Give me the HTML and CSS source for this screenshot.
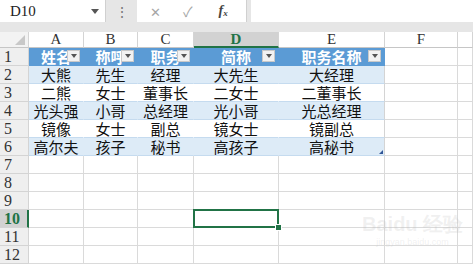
FILE: index.html
```html
<!DOCTYPE html>
<html>
    <head>
        <meta charset="utf-8" />
        <title>Sheet</title>
        <link rel="stylesheet" href="styles.css">
    </head>
    <body>
        <div class="formula-bar">
            <div class="name-box">
                <span class="cell-ref">D10</span>
                <span class="caret"></span>
            </div>
            <div class="dots">⋮</div>
            <div class="fx-box">
                <span class="btn-x">✕</span>
                <span class="btn-ok">✓</span>
                <span class="btn-fx">f<sub>x</sub></span>
            </div>
            <div class="formula-input"></div>
        </div>
        <div class="band"></div>
        <div class="sheet" id="sheet"></div>
        <div class="watermark">
            <div class="wm-logo">Bai<span class="paw">du</span> 经验</div>
            <div class="wm-url">jingyan.baidu.com</div>
        </div>

        <script>
            const letters = ["A", "B", "C", "D", "E", "F", "G"];
            const table = [
                ["姓名", "称呼", "职务", "简称", "职务名称"],
                ["大熊", "先生", "经理", "大先生", "大经理"],
                ["二熊", "女士", "董事长", "二女士", "二董事长"],
                ["光头强", "小哥", "总经理", "光小哥", "光总经理"],
                ["镜像", "女士", "副总", "镜女士", "镜副总"],
                ["高尔夫", "孩子", "秘书", "高孩子", "高秘书"]
            ];

            function cell(cls, text) {
                const div = document.createElement("div");
                div.className = cls;
                if (text) div.textContent = text;
                return div;
            }

            const sheet = document.getElementById("sheet");

            // Column headers
            sheet.appendChild(cell("corner"));
            letters.forEach(function (l) {
                sheet.appendChild(cell(l === "D" ? "col-head active" : "col-head", l === "G" ? "" : l));
            });

            // Rows
            for (let r = 1; r <= 12; r++) {
                sheet.appendChild(cell(r === 10 ? "row-head active" : "row-head", String(r)));
                letters.forEach(function (l, c) {
                    let div;
                    if (r === 1 && c < 5) {
                        div = cell("c t-head");
                        div.appendChild(cell("label", table[0][c]));
                        div.appendChild(cell("filter"));
                    } else if (r <= 6 && c < 5) {
                        div = cell(r % 2 === 0 ? "c t-row band-row" : "c t-row", table[r - 1][c]);
                        if (c === 4) div.classList.add("t-last");
                        if (r === 6 && c === 4) div.appendChild(cell("resize"));
                    } else {
                        div = cell("c");
                    }
                    if (r === 10 && l === "D") div.classList.add("selected");
                    sheet.appendChild(div);
                });
            }
        </script>
    </body>
</html>
```

FILE: styles.css
```css
body {
    margin: 0;
    background-color: #e6e6e6;
    font-family: "Noto Sans CJK SC", sans-serif;
    overflow: hidden;
}

.formula-bar {
    display: flex;
    height: 22px;
}

.name-box {
    width: 106px;
    background-color: white;
    display: flex;
    align-items: center;
    justify-content: space-between;
    padding: 0 6px 0 10px;
    box-sizing: border-box;
    border-right: 1px solid #d0d0d0;
}

.cell-ref {
    font-family: "Liberation Serif", serif;
    font-size: 15px;
    color: #222;
}

.caret {
    width: 0;
    height: 0;
    border-left: 4px solid transparent;
    border-right: 4px solid transparent;
    border-top: 5px solid #555;
}

.dots {
    width: 31px;
    text-align: center;
    color: #777;
    font-size: 14px;
    line-height: 22px;
}

.fx-box {
    width: 109px;
    background-color: white;
    display: flex;
    align-items: center;
    border-right: 1px solid #d0d0d0;
    color: #a6a6a6;
}

.btn-x {
    margin-left: 13px;
    font-size: 13px;
}

.btn-ok {
    margin-left: 22px;
    font-size: 14px;
}

.btn-fx {
    margin-left: 26px;
    font-family: "Liberation Serif", serif;
    font-style: italic;
    font-weight: bold;
    font-size: 14px;
    color: #444;
}

.btn-fx sub {
    font-size: 9px;
    vertical-align: -1px;
}

.formula-input {
    flex: 1;
    margin-left: 4px;
    background-color: white;
}

.band {
    height: 10px;
}

.sheet {
    display: grid;
    grid-template-columns: 29px 55px 54px 56px 85px 106px 73px 1fr;
    grid-template-rows: 16px;
    grid-auto-rows: 18px;
    background-color: white;
}

.corner,
.col-head,
.row-head {
    background-color: #f3f3f3;
    border-right: 1px solid #d4d4d4;
    border-bottom: 1px solid #c6c6c6;
    box-sizing: border-box;
    font-family: "Liberation Serif", serif;
    font-size: 15px;
    line-height: 1;
    color: #333;
    display: flex;
    align-items: center;
    justify-content: center;
}

.corner {
    position: relative;
}

.corner::after {
    content: "";
    position: absolute;
    right: 3px;
    bottom: 2px;
    border-left: 10px solid transparent;
    border-bottom: 10px solid #c8c8c8;
}

.col-head {
    background-color: white;
}

.row-head {
    background-color: #efefef;
    justify-content: flex-start;
    padding-left: 4px;
    font-size: 16px;
    border-bottom-color: #d4d4d4;
}

.col-head.active {
    background-color: #d2d2d2;
    color: #217346;
    border-bottom: 2px solid #217346;
    font-weight: bold;
}

.row-head.active {
    background-color: #d2d2d2;
    color: #217346;
    border-right: 2px solid #217346;
    font-weight: bold;
}

.c {
    border-right: 1px solid #dadada;
    border-bottom: 1px solid #dadada;
    box-sizing: border-box;
    position: relative;
    font-size: 15px;
    line-height: 1;
    display: flex;
    align-items: center;
    justify-content: center;
    white-space: nowrap;
}

.t-head {
    background-color: #5b9bd5;
    color: white;
    font-weight: bold;
    border-right-color: #5b9bd5;
    border-bottom-color: #5b9bd5;
}

.filter {
    position: absolute;
    right: 3px;
    top: 2px;
    width: 13px;
    height: 12px;
    background-color: #f2f2f2;
    border: 1px solid #c9c9c9;
    box-sizing: border-box;
    display: flex;
    align-items: center;
    justify-content: center;
}

.filter::after {
    content: "";
    border-left: 3px solid transparent;
    border-right: 3px solid transparent;
    border-top: 4px solid #555;
}

.t-row {
    color: #111;
    border-right-color: transparent;
    border-bottom-color: #c5dbef;
}

.band-row {
    background-color: #ddebf7;
    border-right-color: #ddebf7;
}

.t-last {
    border-right-color: #d4d4d4;
}

.resize {
    position: absolute;
    right: 1px;
    bottom: 1px;
    border-left: 4px solid transparent;
    border-bottom: 4px solid #2f5597;
}

.selected::after {
    content: "";
    position: absolute;
    left: -1px;
    top: -1px;
    right: -1px;
    bottom: -1px;
    border: 2px solid #217346;
}

.selected::before {
    content: "";
    position: absolute;
    right: -4px;
    bottom: -4px;
    width: 5px;
    height: 5px;
    background-color: #217346;
    border: 1px solid white;
    z-index: 2;
}

.watermark {
    position: absolute;
    left: 362px;
    top: 214px;
    color: rgba(190, 190, 190, 0.22);
    font-family: "Liberation Sans", sans-serif;
    text-align: center;
    line-height: 1;
}

.wm-logo {
    font-size: 20px;
    font-weight: bold;
}

.wm-url {
    font-size: 9px;
    margin-top: 4px;
}
```
